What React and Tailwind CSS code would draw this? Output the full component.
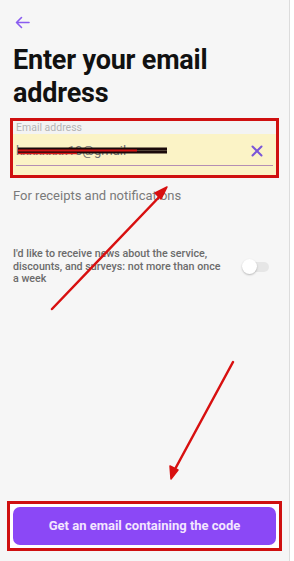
import React from "react";

const App = () => {
  return (
    <div className="w-[294px] h-[561px] bg-white flex" style={{ fontFamily: "Roboto, 'Liberation Sans', sans-serif" }}>
      <div className="relative w-[290px] h-full bg-[#f6f6f6] border-r border-[#dcdcdc] flex flex-col">
        {/* Back */}
        <div className="pt-[16px] pl-[15px] h-[44px]">
          <svg width="15" height="13" viewBox="0 0 15 13" fill="none" stroke="#8a5cf0" strokeWidth="1.6" strokeLinecap="round" strokeLinejoin="round">
            <path d="M14 6.5H1.5M6.5 1.5L1.5 6.5L6.5 11.5" />
          </svg>
        </div>

        <h1 className="px-[13px] text-[27px] leading-[33px] font-bold text-[#111] tracking-[-0.2px]">
          Enter your email address
        </h1>

        {/* Email field */}
        <div className="mx-[10px] mt-[8px] border-[3px] border-[#cf1010] bg-[#f3f3f3]">
          <div className="h-[13px] pl-[3px] text-[10.5px] leading-[13px] text-[#b3b3b3]">Email address</div>
          <div className="relative h-[33px] bg-[#fbf3c6] flex items-center px-[3px]">
            <span className="text-[13px] text-[#6e6e6e]">kxxxxxxx10@gmail</span>
            <svg className="absolute left-[4px] top-[12px]" width="152" height="10" viewBox="0 0 152 10" fill="none">
              <path d="M1 3 L150 3" stroke="#1a0a0a" strokeWidth="3" />
              <path d="M1 6 L150 6" stroke="#1a0a0a" strokeWidth="3" />
              <path d="M1 4.5 L120 4.5" stroke="#d41414" strokeWidth="2" />
              <path d="M1 7.5 L60 7.5" stroke="#d41414" strokeWidth="1.5" />
            </svg>
            <svg className="ml-auto mr-[10px]" width="12" height="12" viewBox="0 0 12 12" stroke="#7a55d8" strokeWidth="2" strokeLinecap="round">
              <path d="M1.5 1.5L10.5 10.5M10.5 1.5L1.5 10.5" />
            </svg>
            <div className="absolute left-[3px] right-[3px] bottom-[1px] h-[1.5px] bg-[#b48fb4]" />
          </div>
          <div className="h-[8px] bg-[#fbf3c6]" />
        </div>

        <p className="px-[13px] mt-[10px] text-[13px] leading-[16px] text-[#7a7a7a]">For receipts and notifications</p>

        {/* News toggle */}
        <div className="mt-[44px] pl-[13px] pr-[20px] flex items-center gap-[17px]">
          <p className="w-[213px] text-[10.7px] leading-[12.5px] font-medium text-[#6b6b6b]">
            I'd like to receive news about the service, discounts, and surveys: not more than once a week
          </p>
          <div className="relative w-[27px] h-[16px] flex items-center">
            <div className="absolute left-[5px] right-0 h-[10px] rounded-full bg-[#e6e6e6]" />
            <div className="absolute left-0 w-[15px] h-[15px] rounded-full bg-white shadow-[0_1px_2px_rgba(0,0,0,0.25)]" />
          </div>
        </div>

        {/* Button */}
        <div className="mt-auto mb-[10px] mx-[7px] border-[3px] border-[#cf1010] bg-white p-[3px]">
          <button className="w-full h-[38px] rounded-[7px] bg-[#8b48f6] text-[#f3e6ff] text-[13px] font-bold">
            Get an email containing the code
          </button>
        </div>

        {/* Annotation arrows */}
        <svg className="absolute inset-0 pointer-events-none" width="290" height="561" viewBox="0 0 290 561" fill="none">
          <path d="M52 309 L163 193" stroke="#d81010" strokeWidth="2.5" strokeLinecap="round" />
          <path d="M167 187 L155 193 L161 199 Z" fill="#d81010" stroke="#d81010" strokeWidth="1.5" strokeLinejoin="round" />
          <path d="M233 362 L174 471" stroke="#d81010" strokeWidth="2.5" strokeLinecap="round" />
          <path d="M171 479 L170 466 L178 470 Z" fill="#d81010" stroke="#d81010" strokeWidth="1.5" strokeLinejoin="round" />
        </svg>
      </div>
    </div>
  );
};

export default App;
